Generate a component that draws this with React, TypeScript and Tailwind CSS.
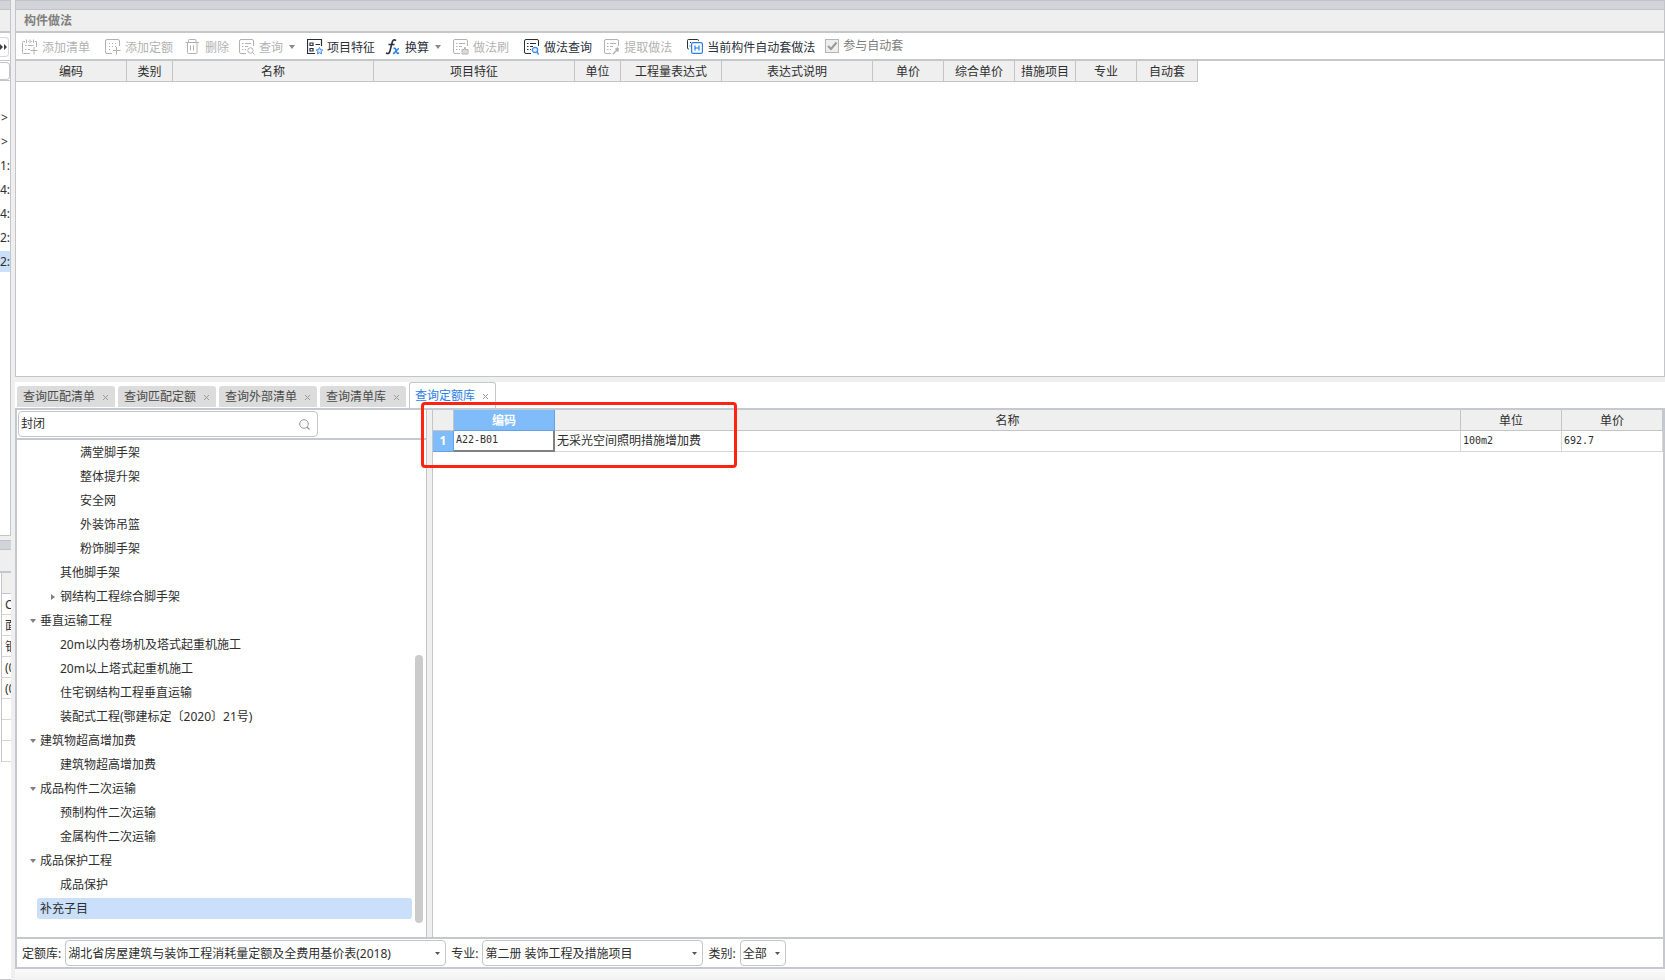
import { useState } from 'react'
import clsx from 'clsx'

type IconName = 'addList' | 'addQuota' | 'trash' | 'search' | 'feature' | 'fx' | 'brush' | 'query' | 'extract' | 'auto'

const Sheet = () => (
  <>
    <path d="M14.5 7V2a1.5 1.5 0 0 0-1.5-1.5H2A1.5 1.5 0 0 0 .5 2v11A1.5 1.5 0 0 0 2 14.5h5" />
    <path d="M3 4.5h1.5M6 4.5h6M3 7.5h1.5M6 7.5h3M3 10.5h1.5M6 10.5h1" />
  </>
)

function Icon({ name }: { name: IconName }) {
  return (
    <svg viewBox="0 0 16 16" className="size-4 shrink-0" fill="none" stroke="currentColor" strokeWidth="1">
      {name === 'addList' && (
        <>
          <path d="M3 2.5H1.5a1 1 0 0 0-1 1v10a1 1 0 0 0 1 1H8M13 2.5h1.5V8M4.5 .5v3.5M8 .5v3.5M11.5 .5v3.5M6 2.5h.8M9.3 2.5h.8" />
          <path d="M3 6.5h1.5M6 6.5h5.5M3 10.5h1.5M6 10.5h2M12 8v7.5M8.500 11.500h7" />
        </>
      )}
      {name === 'addQuota' && (
        <>
          <path d="M14.5 7V2A1.5 1.5 0 0 0 13 .5H2A1.5 1.5 0 0 0 .5 2v11A1.5 1.5 0 0 0 2 14.5h5" />
          <path d="M4 4.5h1M7 4.5h1M10 4.5h1M4 7.5h1M7 7.5h1M10 7.5h1M4 10.5h1M11.5 8v7.5M8 11.5h7.5" />
        </>
      )}
      {name === 'trash' && (
        <path d="M.5 3.5h13.5M3.5 3.5v-2a1 1 0 0 1 1-1h5.5a1 1 0 0 1 1 1v2M2.5 3.5v10a1 1 0 0 0 1 1h7.5a1 1 0 0 0 1-1v-10M5.5 6.5v5M8.5 6.5v5" />
      )}
      {name === 'search' && (
        <>
          <Sheet />
          <circle cx="11.5" cy="11.5" r="2.7" />
          <path d="m13.5 13.5 2 2" />
        </>
      )}
      {name === 'feature' && (
        <>
          <path d="M14.5 7V.5H.5v14H8M3 4h3v2.5H3zM3 9.5h3V12H3zM8.5 5.5H13" strokeWidth="1.2" />
          <path
            d="m12.5 8.5 1 2.2 2.3.3-1.7 1.6.4 2.3-2-1.2-2 1.2.4-2.3-1.7-1.6 2.3-.3z"
            fill="#dcebfd"
            stroke="#3d8bf0"
          />
        </>
      )}
      {name === 'fx' && (
        <>
          <path d="M11 1.7C8.700-.3 7.600 1.500 7 4L5 12c-.5 2-1.600 3.200-4 2M3.500 5.500h6" strokeWidth="1.6" />
          <path d="M8.5 9.5c2-1 2 .5 2.700 2.500s1.200 3.200 2.800 1.700M14 9.500c-2 0-3.500 5-6 5" stroke="#2b7de9" strokeWidth="1.5" />
        </>
      )}
      {name === 'brush' && (
        <>
          <Sheet />
          <path d="M9 12v-1.5h2.5V8.5h1V10.5H15V12zM9 12v3h6v-3M11 13v2M13 13v2" />
        </>
      )}
      {name === 'query' && (
        <>
          <Sheet />
          <circle cx="11" cy="11" r="2.7" fill="#dcebfd" stroke="#3d8bf0" strokeWidth="1.2" />
          <path d="m13 13.2 1.7 2.3" stroke="#3d8bf0" strokeWidth="1.4" />
        </>
      )}
      {name === 'extract' && (
        <>
          <Sheet />
          <path d="m9 15 4-4M11.5 9.5l3 3" strokeWidth="1.5" />
          <path d="m12.5 11 2-2" strokeWidth="2.5" />
        </>
      )}
      {name === 'auto' && (
        <>
          <path d="M11.5 2V1.5a1 1 0 0 0-1-1h-9a1 1 0 0 0-1 1V9a1 1 0 0 0 1 1H2M3 3.5h1M2.5 7h1" />
          <rect x="4.6" y="3.6" width="10.8" height="10.8" rx="1.5" fill="white" stroke="#2b7de9" strokeWidth="1.2" />
          <path d="M8 6.5v5M12 6.5v5M8 9h4" stroke="#2b7de9" strokeWidth="1.2" />
        </>
      )}
    </svg>
  )
}

function Caret({ className }: { className?: string }) {
  return (
    <svg viewBox="0 0 6 4" className={clsx('h-1 w-1.5 shrink-0', className)} fill="currentColor">
      <path d="M0 0h6L3 4z" />
    </svg>
  )
}

const tools: { icon: IconName; label: string; enabled?: boolean; menu?: boolean; gap: string }[] = [
  { icon: 'addList', label: '添加清单', gap: 'mr-[15px]' },
  { icon: 'addQuota', label: '添加定额', gap: 'mr-3' },
  { icon: 'trash', label: '删除', gap: 'mr-[10px]' },
  { icon: 'search', label: '查询', menu: true, gap: 'mr-3' },
  { icon: 'feature', label: '项目特征', enabled: true, gap: 'mr-[10px]' },
  { icon: 'fx', label: '换算', enabled: true, menu: true, gap: 'mr-3' },
  { icon: 'brush', label: '做法刷', gap: 'mr-[15px]' },
  { icon: 'query', label: '做法查询', enabled: true, gap: 'mr-3' },
  { icon: 'extract', label: '提取做法', gap: 'mr-[15px]' },
  { icon: 'auto', label: '当前构件自动套做法', enabled: true, gap: 'mr-[10px]' }
]

const columns = [
  { label: '编码', width: 'w-[111px]' },
  { label: '类别', width: 'w-[46px]' },
  { label: '名称', width: 'w-[201px]' },
  { label: '项目特征', width: 'w-[201px]' },
  { label: '单位', width: 'w-[46px]' },
  { label: '工程量表达式', width: 'w-[101px]' },
  { label: '表达式说明', width: 'w-[151px]' },
  { label: '单价', width: 'w-[71px]' },
  { label: '综合单价', width: 'w-[71px]' },
  { label: '措施项目', width: 'w-[61px]' },
  { label: '专业', width: 'w-[61px]' },
  { label: '自动套', width: 'w-[61px]' }
]

const tabs = ['查询匹配清单', '查询匹配定额', '查询外部清单', '查询清单库', '查询定额库']

const tree: { label: string; level: 1 | 2 | 3; state?: 'open' | 'closed' }[] = [
  { label: '满堂脚手架', level: 3 },
  { label: '整体提升架', level: 3 },
  { label: '安全网', level: 3 },
  { label: '外装饰吊篮', level: 3 },
  { label: '粉饰脚手架', level: 3 },
  { label: '其他脚手架', level: 2 },
  { label: '钢结构工程综合脚手架', level: 2, state: 'closed' },
  { label: '垂直运输工程', level: 1, state: 'open' },
  { label: '20m以内卷场机及塔式起重机施工', level: 2 },
  { label: '20m以上塔式起重机施工', level: 2 },
  { label: '住宅钢结构工程垂直运输', level: 2 },
  { label: '装配式工程(鄂建标定〔2020〕21号)', level: 2 },
  { label: '建筑物超高增加费', level: 1, state: 'open' },
  { label: '建筑物超高增加费', level: 2 },
  { label: '成品构件二次运输', level: 1, state: 'open' },
  { label: '预制构件二次运输', level: 2 },
  { label: '金属构件二次运输', level: 2 },
  { label: '成品保护工程', level: 1, state: 'open' },
  { label: '成品保护', level: 2 },
  { label: '补充子目', level: 1 }
]

const indent = { 1: 'pl-2', 2: 'pl-7', 3: 'pl-12' }

function Toolbar() {
  return (
    <div className="flex h-7 shrink-0 items-center border-b-2 border-[#c5c8cb] pt-0.5 pl-1.5">
      {tools.map(t => (
        <button
          key={t.label}
          type="button"
          disabled={!t.enabled}
          className={clsx('flex shrink-0 items-center gap-1', t.gap, t.enabled ? 'text-[#2b2f3a]' : 'text-[#b2b2b2]')}
        >
          <Icon name={t.icon} />
          <span className="pt-px">{t.label}</span>
          {t.menu && <Caret className="ml-0.5 text-[#8a8a8a]" />}
        </button>
      ))}
      <label className="flex shrink-0 items-center gap-1 pb-0.5 text-[#7d7d7d]">
        <span className="relative flex">
          <input
            type="checkbox"
            defaultChecked
            disabled
            className="size-3.5 appearance-none border border-[#b5b5b5] bg-[#eeeeee]"
          />
          <svg viewBox="0 0 14 14" className="pointer-events-none absolute inset-0" fill="none" stroke="#999" strokeWidth="2">
            <path d="m3 7 3 3 5.5-6.5" />
          </svg>
        </span>
        参与自动套
      </label>
    </div>
  )
}

function MethodTable() {
  return (
    <div className="min-h-0 flex-1 overflow-hidden">
      <table className="table-fixed border-separate border-spacing-0">
        <thead>
          <tr>
            {columns.map(c => (
              <th
                key={c.label}
                className={clsx(
                  'h-[21px] border-r border-b border-[#c4c5c9] bg-[#efefef] px-0 pt-0.5 pb-0 font-normal',
                  c.width
                )}
              >
                {c.label}
              </th>
            ))}
          </tr>
        </thead>
      </table>
    </div>
  )
}

function Tabs({ active, onChange }: { active: string; onChange: (t: string) => void }) {
  return (
    <div className="flex h-[26px] shrink-0 items-end gap-[3px] pl-0.5">
      {tabs.map(t => (
        <button
          key={t}
          type="button"
          onClick={() => onChange(t)}
          className={clsx(
            'flex items-center gap-2 rounded-t-[3px] pt-0.5 pr-[7px]',
            t === active
              ? 'h-[26px] border border-b-0 border-[#c5c8cf] bg-white pl-[5px] text-[#2b7de9]'
              : 'mb-px h-[21px] bg-[#dcdcdc] pl-1.5 text-[#4a4a4a]'
          )}
        >
          <span>{t}</span>
          <svg viewBox="0 0 5 5" className="size-[5px]" stroke="#999">
            <path d="m0 0 5 5M5 0 0 5" />
          </svg>
        </button>
      ))}
    </div>
  )
}

function TreePanel() {
  const [selected, setSelected] = useState(tree.length - 1)
  return (
    <div className="flex w-[410px] shrink-0 flex-col border-r border-[#c4c5c9] bg-white">
      <div className="h-[30px] shrink-0 border-b-2 border-[#c5c8cf] pt-px pl-px">
        <label className="flex h-[26px] w-[300px] items-center rounded-[4px] border border-[#c4c5c9] pt-px pr-[7px] pl-0.5">
          <input aria-label="搜索" defaultValue="封闭" className="min-w-0 flex-1 outline-none" />
          <svg viewBox="0 0 11 11" className="size-[11px]" fill="none" stroke="#999">
            <circle cx="5" cy="5" r="4.3" />
            <path d="m8 8 2.5 2.5" strokeWidth="1.3" />
          </svg>
        </label>
      </div>
      <div className="flex min-h-0 flex-1">
        <ul className="min-w-0 flex-1 overflow-hidden pt-px" role="tree">
          {tree.map((n, i) => (
            <li key={i} role="treeitem" aria-selected={i === selected} className="h-6">
              <button
                type="button"
                onClick={() => setSelected(i)}
                className={clsx('flex h-full w-full items-center text-left', indent[n.level])}
              >
                <span className="flex w-3 shrink-0 justify-end pr-px text-[#808080]">
                  {n.state && <Caret className={clsx(n.state === 'closed' && '-rotate-90')} />}
                </span>
                <span
                  className={clsx(
                    'flex h-[21px] min-w-0 flex-1 items-center rounded-[3px] pl-[3px]',
                    i === selected && 'bg-[#c9dffa]'
                  )}
                >
                  {n.label}
                </span>
              </button>
            </li>
          ))}
        </ul>
        <div className="flex w-[14px] shrink-0 flex-col justify-end pr-[3px] pb-[14px] pl-[3px]">
          <div className="h-[268px] rounded-full bg-[#cbcbcb]" />
        </div>
      </div>
    </div>
  )
}

function ResultTable() {
  const th = 'h-[21px] border-r border-b border-[#c4c5c9] bg-[#efefef] px-0 pt-0.5 pb-0 font-normal'
  const td = 'h-[21px] border-r border-b border-[#d6d6d6] py-0 pr-0 pl-0.5'
  const mono = "font-['DejaVu_Sans_Mono',monospace] text-[10px] leading-4"
  return (
    <div className="relative min-w-0 flex-1 border-l border-[#c4c5c9] bg-white">
      <table className="w-full table-fixed border-separate border-spacing-0">
        <thead>
          <tr>
            <th className={clsx(th, 'w-[21px]')}></th>
            <th className="h-[21px] w-[101px] border-r border-b border-[#62a3ea] bg-[#80bbfa] px-0 pt-0.5 pb-0 font-bold text-white">
              编码
            </th>
            <th className={th}>名称</th>
            <th className={clsx(th, 'w-[101px]')}>单位</th>
            <th className={clsx(th, 'w-[101px]')}>单价</th>
          </tr>
        </thead>
        <tbody>
          <tr>
            <th className="h-[21px] border-r border-b border-[#62a3ea] bg-[#80bbfa] p-0 font-bold text-white">1</th>
            <td className={clsx('h-[21px] border-r-2 border-b-2 border-[#808080] py-0 pr-0 pl-0.5', mono)}>A22-B01</td>
            <td className={td}>无采光空间照明措施增加费</td>
            <td className={clsx(td, mono)}>100m2</td>
            <td className={clsx(td, mono)}>692.7</td>
          </tr>
        </tbody>
      </table>
      <div className="pointer-events-none absolute -top-2 -left-3 z-10 h-[66px] w-[316px] rounded-[4px] border-3 border-[#ff2412]" />
    </div>
  )
}

function Picker({ id, label, value, width }: { id: string; label: string; value: string; width: string }) {
  return (
    <div className="flex items-center gap-1">
      <label htmlFor={id} className="pt-0.5">
        {label}:
      </label>
      <div className={clsx('relative', width)}>
        <select
          id={id}
          defaultValue={value}
          className="h-[26px] w-full appearance-none rounded-[4px] border border-[#c4c5c9] bg-white pt-0.5 pl-0.5"
        >
          <option>{value}</option>
        </select>
        <svg viewBox="0 0 5 3" className="pointer-events-none absolute top-3 right-1.5 h-[3px] w-[5px]" fill="#50545f">
          <path d="M0 0h5L2.5 3z" />
        </svg>
      </div>
    </div>
  )
}

function SidePanels() {
  const rows = ['C', '面', '钢', '(0', '(0', '', '', '']
  return (
    <aside className="flex w-[11px] shrink-0 flex-col overflow-hidden whitespace-nowrap">
      <div className="flex min-h-0 flex-[536] flex-col overflow-hidden border-r border-b border-[#c4c5c9] bg-white">
        <div className="h-[10px] shrink-0 border-y border-[#c1c3ca] bg-[#d3d4d9]" />
        <div className="h-[23px] shrink-0 border-b-2 border-[#c5c8cb] bg-[#efefef]" />
        <div className="flex h-7 shrink-0 items-center border-b border-[#c4c5c9]">
          <button type="button" aria-label="更多" className="flex h-5 w-[9px] items-center rounded-r-[4px] border border-l-0 border-[#d8d8d8]">
            <svg viewBox="0 0 8 6" className="h-1.5 w-2" fill="#3d3f4c">
              <path d="M0 0v6l3-3zM4 0v6l3-3z" />
            </svg>
          </button>
        </div>
        <div className="flex h-5 shrink-0 items-center border-b border-[#c4c5c9]">
          <span className="h-[18px] w-[10px] rounded-r-[4px] border border-l-0 border-[#c4c5c9]" />
        </div>
        <div className="pt-6">
          {['>', '>', '1:', '4:', '4:', '2:', '2:'].map((t, i) => (
            <div key={i} className="flex h-6 items-center">
              <span className={clsx('w-full leading-[21px]', i === 6 && 'bg-[#c9dffa]', i < 2 && 'pl-px')}>{t}</span>
            </div>
          ))}
        </div>
      </div>
      <div className="flex min-h-0 flex-[444] flex-col overflow-hidden border-b border-[#c4c5c9] bg-white">
        <div className="h-1 shrink-0 bg-[#efefef]" />
        <div className="h-[10px] shrink-0 border-y border-[#c1c3ca] bg-[#d3d4d9]" />
        <div className="h-[23px] shrink-0 border-b-2 border-[#c5c8cb] bg-[#efefef]" />
        <div className="ml-px border-l border-[#c4c5c9]">
          <div className="h-[21px] border-b border-[#c4c5c9] bg-[#efefef]" />
          {rows.map((r, i) => (
            <div key={i} className="h-[21px] overflow-hidden border-b border-[#d6d6d6] pl-[3px] leading-[21px]">
              {r}
            </div>
          ))}
        </div>
      </div>
    </aside>
  )
}

export default function App() {
  const [tab, setTab] = useState('查询定额库')

  return (
    <div className="flex h-screen overflow-hidden bg-[#efefef] font-['Noto_Sans','Noto_Sans_CJK_SC',sans-serif] text-xs text-[#2e2e2e]">
      <SidePanels />
      <main className="ml-1 flex min-w-0 flex-1 flex-col">
        <section className="flex min-h-0 flex-[376] flex-col border-x border-b border-[#c4c5c9] bg-white">
          <div className="h-[10px] shrink-0 border-y border-[#c1c3ca] bg-[#d3d4d9]" />
          <h1 className="flex h-[23px] shrink-0 items-center border-b-2 border-[#c5c8cb] bg-[#efefef] pl-2 font-bold text-[#808080]">
            构件做法
          </h1>
          <Toolbar />
          <MethodTable />
        </section>
        <section className="flex min-h-0 flex-[604] flex-col">
          <div className="h-[5px] shrink-0" />
          <div className="bg-white">
            <Tabs active={tab} onChange={setTab} />
          </div>
          <div className="flex min-h-0 flex-1 flex-col border-2 border-[#c5c8cf] bg-white">
            <div className="flex min-h-0 flex-1 gap-[5px] bg-[#efefef]">
              <TreePanel />
              <ResultTable />
            </div>
            <div className="flex h-[30px] shrink-0 items-center gap-[5px] border-t-2 border-[#c5c8cb] pl-[5px]">
              <Picker id="library" label="定额库" value="湖北省房屋建筑与装饰工程消耗量定额及全费用基价表(2018)" width="w-[381px]" />
              <Picker id="major" label="专业" value="第二册 装饰工程及措施项目" width="w-[221px]" />
              <Picker id="kind" label="类别" value="全部" width="w-[46px]" />
            </div>
          </div>
          <div className="h-[11px] shrink-0 bg-gradient-to-b from-[#fbfbfb] to-[#f2f2f3]" />
        </section>
      </main>
    </div>
  )
}
